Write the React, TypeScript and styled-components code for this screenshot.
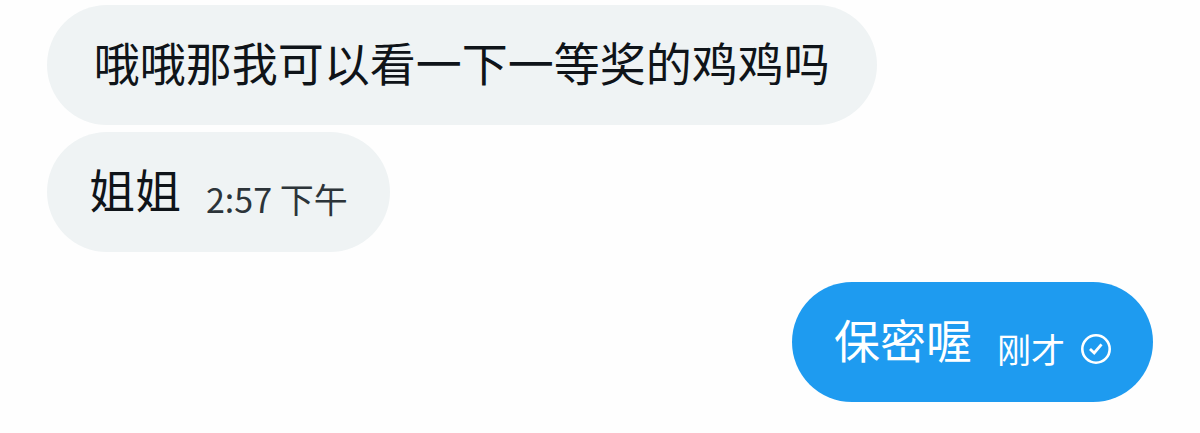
import React from "react";
import styled, { createGlobalStyle } from "styled-components";

const GlobalStyle = createGlobalStyle`
  body {
    margin: 0;
    background: #fefefe;
    font-family: "Noto Sans CJK SC", sans-serif;
  }
`;

const Conversation = styled.main`
  display: flex;
  flex-direction: column;
  align-items: flex-start;
  gap: 7px;
  padding: 5px 47px 31px;
`;

const Bubble = styled.article<{ $sent?: boolean; $wide?: boolean }>`
  display: flex;
  align-items: flex-end;
  justify-content: center;
  box-sizing: border-box;
  width: ${(p) => (p.$wide ? "75%" : "auto")};
  gap: 25px;
  padding: 22px 42px 30px;
  border-radius: 60px;
  background: ${(p) => (p.$sent ? "#1e9bf0" : "#eff3f4")};
  color: ${(p) => (p.$sent ? "#ffffff" : "#0f1419")};
  align-self: ${(p) => (p.$sent ? "flex-end" : "flex-start")};
  margin-top: ${(p) => (p.$sent ? "23px" : "0")};
`;

const Message = styled.p`
  margin: 0;
  font-size: 46px;
  line-height: 68px;
`;

const Meta = styled.span<{ $sent?: boolean }>`
  display: flex;
  align-items: center;
  gap: 16px;
  font-size: 34px;
  line-height: 46px;
  color: ${(p) => (p.$sent ? "#ffffff" : "#2c3439")};
`;

const Delivered = () => (
  <svg width="30" height="30" viewBox="0 0 30 30" fill="none" stroke="currentColor" role="img" aria-label="已发送">
    <circle cx="15" cy="15" r="13.7" strokeWidth="2.6" />
    <path d="M9 15l4.2 4L20.5 10.3" strokeWidth="2.8" />
  </svg>
);

export default function App() {
  return (
    <>
      <GlobalStyle />
      <Conversation lang="zh-CN">
        <Bubble $wide><Message>哦哦那我可以看一下一等奖的鸡鸡吗</Message></Bubble>
        <Bubble>
          <Message>姐姐</Message>
          <Meta><time>2:57 下午</time></Meta>
        </Bubble>
        <Bubble $sent>
          <Message>保密喔</Message>
          <Meta $sent><time>刚才</time><Delivered /></Meta>
        </Bubble>
      </Conversation>
    </>
  );
}
